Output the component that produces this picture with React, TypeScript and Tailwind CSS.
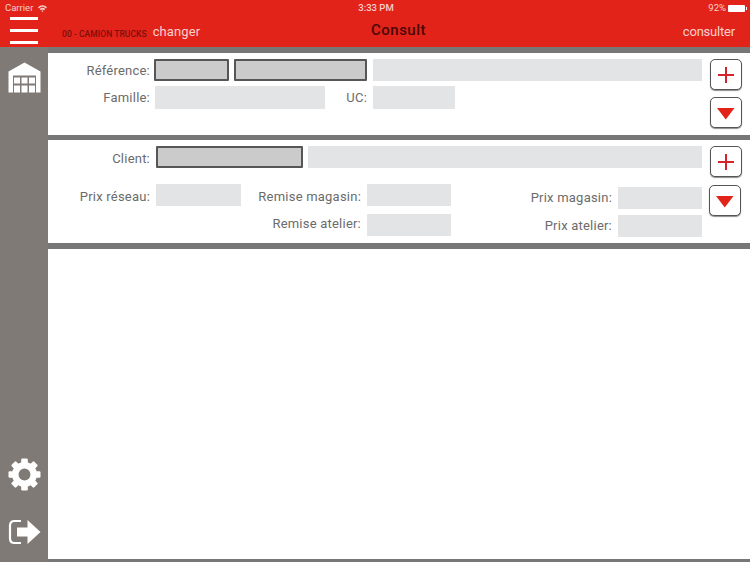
const font = "font-['Roboto','Liberation_Sans',sans-serif]";

function Field({className = ""}: {className?: string}) {
    return <div className={"h-[22px] bg-[#e3e4e6] " + className}/>;
}

function SelectedField({className = ""}: {className?: string}) {
    return <div className={"h-[22px] bg-[#cbcbcb] border-2 border-[#565656] rounded-[1px] " + className}/>;
}

function Label({text, className = ""}: {text: string, className?: string}) {
    return <span className={"shrink-0 text-right text-[13px] leading-[22px] tracking-[0.22px] text-[#6b6b6b] " + className}>{text}</span>;
}

function SquareButton({children, className = ""}: {children: React.ReactNode, className?: string}) {
    return (
        <div className={"w-[32px] h-[31px] flex items-center justify-center bg-white border border-[#555555] rounded-[5px] shadow-[0_1px_1px_rgba(0,0,0,0.45)] " + className}>
            {children}
        </div>
    );
}

function PlusIcon() {
    return (
        <svg width="18" height="18" viewBox="0 0 18 18">
            <path d="M9 1v16M1 9h16" stroke="#d4242a" strokeWidth="2" fill="none"/>
        </svg>
    );
}

function DownIcon() {
    return (
        <svg width="20" height="14" viewBox="0 0 20 14" className="mt-[3px]">
            <path d="M1 1h17.5L9.75 12.5z" fill="#e2231a"/>
        </svg>
    );
}

function WifiIcon() {
    return (
        <svg width="9" height="7" viewBox="0 0 18 14">
            <path d="M0 4.500C5-1 13-1 18 4.500L15.800 6.800C11.800 2.500 6.200 2.500 2.200 6.800z" fill="#f8d0cd"/>
            <path d="M3.500 8.200C6.800 4.800 11.200 4.800 14.500 8.200L12.300 10.400C10.200 8.200 7.800 8.200 5.700 10.400z" fill="#f8d0cd"/>
            <path d="M7 11.800C8.200 10.600 9.800 10.600 11 11.800L9 14z" fill="#f8d0cd"/>
        </svg>
    );
}

function WarehouseIcon() {
    return (
        <svg width="33" height="31" viewBox="0 0 33 31">
            <path d="M16.500 0.500L32.500 9.500V30.500H28V13.500H5V30.500H0.500V9.500z" fill="#ffffff"/>
            <path d="M6 15.500h6v6H6zM13.500 15.500h6v6h-6zM21 15.500h6v6h-6zM6 23.500h6v7H6zM13.500 23.500h6v7h-6zM21 23.500h6v7h-6z" fill="#ffffff"/>
        </svg>
    );
}

function GearIcon() {
    const teeth = [0, 45, 90, 135, 180, 225, 270, 315];
    return (
        <svg width="33" height="33" viewBox="0 0 33 33">
            {teeth.map((angle) => (
                <rect key={angle} x="13.200" y="0.500" width="6.600" height="8" rx="1.200" fill="#ffffff" transform={`rotate(${angle} 16.500 16.500)`}/>
            ))}
            <circle cx="16.500" cy="16.500" r="9.200" fill="none" stroke="#ffffff" strokeWidth="6.500"/>
        </svg>
    );
}

function LogoutIcon() {
    return (
        <svg width="33" height="28" viewBox="0 0 33 28">
            <path d="M13 3H6.500Q2 3 2 7.500V20.500Q2 25 6.500 25H13" fill="none" stroke="#ffffff" strokeWidth="2.200"/>
            <path d="M9 9.500H19.500V2L32.500 14L19.500 26V18.500H9z" fill="#ffffff"/>
        </svg>
    );
}

function App() {
    return (
        <div className={"w-[750px] h-[562px] flex flex-col overflow-hidden bg-white " + font}>
            {/* red header with the status bar on top */}
            <div className="h-[47px] shrink-0 bg-[#e2231a] flex flex-col">
                <div className="h-[16px] pt-[1px] pl-[5px] pr-[3px] flex items-center justify-between text-[9.500px] text-[#f8d0cd]">
                    <div className="w-[100px] flex items-center gap-[5px]">
                        <span>Carrier</span>
                        <WifiIcon/>
                    </div>
                    <span className="font-medium">3:33 PM</span>
                    <div className="w-[100px] flex items-center justify-end gap-[2px]">
                        <span>92%</span>
                        <div className="w-[17px] h-[7px] rounded-[1px] bg-white"/>
                        <div className="w-[1px] h-[3px] -ml-[1px] bg-white"/>
                    </div>
                </div>
                <div className="flex-1 flex items-center relative">
                    <div className="w-[48px] shrink-0 -mt-[2px] pl-[10px] flex flex-col gap-[9px]">
                        <div className="w-[28px] h-[3px] bg-white"/>
                        <div className="w-[28px] h-[3px] bg-white"/>
                        <div className="w-[28px] h-[3px] bg-white"/>
                    </div>
                    <span className="ml-[14px] mt-[6px] text-[8.500px] font-medium tracking-[0.05px] text-[#7c0f0b]">00 - CAMION TRUCKS</span>
                    <span className="ml-[6px] text-[13px] tracking-[0.1px] text-[#f8d0cd]">changer</span>
                    <span className="absolute left-[371px] top-[3px] text-[15px] font-medium tracking-[0.5px] text-[#4a0806]">Consult</span>
                    <span className="ml-auto mr-[15px] text-[13px] tracking-[-0.2px] text-[#f8d0cd]">consulter</span>
                </div>
            </div>

            <div className="flex-1 flex">
                {/* side rail */}
                <div className="w-[48px] shrink-0 bg-[#7f7a76] flex flex-col items-center">
                    <div className="mt-[15px]"><WarehouseIcon/></div>
                    <div className="mt-auto"><GearIcon/></div>
                    <div className="mt-[27px] mb-[16px]"><LogoutIcon/></div>
                </div>

                <div className="flex-1 flex flex-col bg-[#777777] pt-[6px] pb-[3px]">
                    {/* article panel */}
                    <div className="h-[82px] bg-white flex pt-[6px] pr-[8px]">
                        <div className="flex-1 flex flex-col gap-[4px]">
                            <div className="flex items-start">
                                <Label text="Référence:" className="w-[102px] mt-[1px]"/>
                                <SelectedField className="ml-[4px] w-[75px]"/>
                                <SelectedField className="ml-[5px] w-[133px]"/>
                                <Field className="ml-[6px] w-[329px]"/>
                            </div>
                            <div className="flex items-center">
                                <Label text="Famille:" className="w-[102px]"/>
                                <Field className="ml-[5px] w-[170px] h-[23px]"/>
                                <Label text="UC:" className="w-[42px]"/>
                                <Field className="ml-[6px] w-[82px] h-[23px]"/>
                            </div>
                        </div>
                        <div className="flex flex-col gap-[7px]">
                            <SquareButton><PlusIcon/></SquareButton>
                            <SquareButton><DownIcon/></SquareButton>
                        </div>
                    </div>

                    {/* client panel */}
                    <div className="h-[103px] mt-[5px] bg-white flex pt-[6px] pr-[8px]">
                        <div className="flex-1 flex flex-col">
                            <div className="flex items-start">
                                <Label text="Client:" className="w-[102px] mt-[2px]"/>
                                <SelectedField className="ml-[6px] w-[147px]"/>
                                <Field className="ml-[5px] w-[394px]"/>
                            </div>
                            <div className="flex mt-[14px]">
                                <div className="flex items-start">
                                    <Label text="Prix réseau:" className="w-[102px] mt-[2px]"/>
                                    <Field className="ml-[6px] w-[85px]"/>
                                </div>
                                <div className="flex flex-col gap-[6px]">
                                    <div className="flex items-start">
                                        <Label text="Remise magasin:" className="w-[120px] mt-[2px]"/>
                                        <Field className="ml-[6px] w-[84px]"/>
                                    </div>
                                    <div className="flex items-start">
                                        <Label text="Remise atelier:" className="w-[120px] -mt-[1px]"/>
                                        <Field className="ml-[6px] w-[84px]"/>
                                    </div>
                                </div>
                                <div className="mt-[3px] flex flex-col gap-[6px]">
                                    <div className="flex">
                                        <Label text="Prix magasin:" className="w-[161px]"/>
                                        <Field className="ml-[6px] w-[84px]"/>
                                    </div>
                                    <div className="flex">
                                        <Label text="Prix atelier:" className="w-[161px]"/>
                                        <Field className="ml-[6px] w-[84px]"/>
                                    </div>
                                </div>
                            </div>
                        </div>
                        <div className="flex flex-col gap-[8px]">
                            <SquareButton><PlusIcon/></SquareButton>
                            <SquareButton className="-ml-[1px]"><DownIcon/></SquareButton>
                        </div>
                    </div>

                    {/* results */}
                    <div className="flex-1 mt-[6px] bg-white"/>
                </div>
            </div>
        </div>
    );
}

export default App;
